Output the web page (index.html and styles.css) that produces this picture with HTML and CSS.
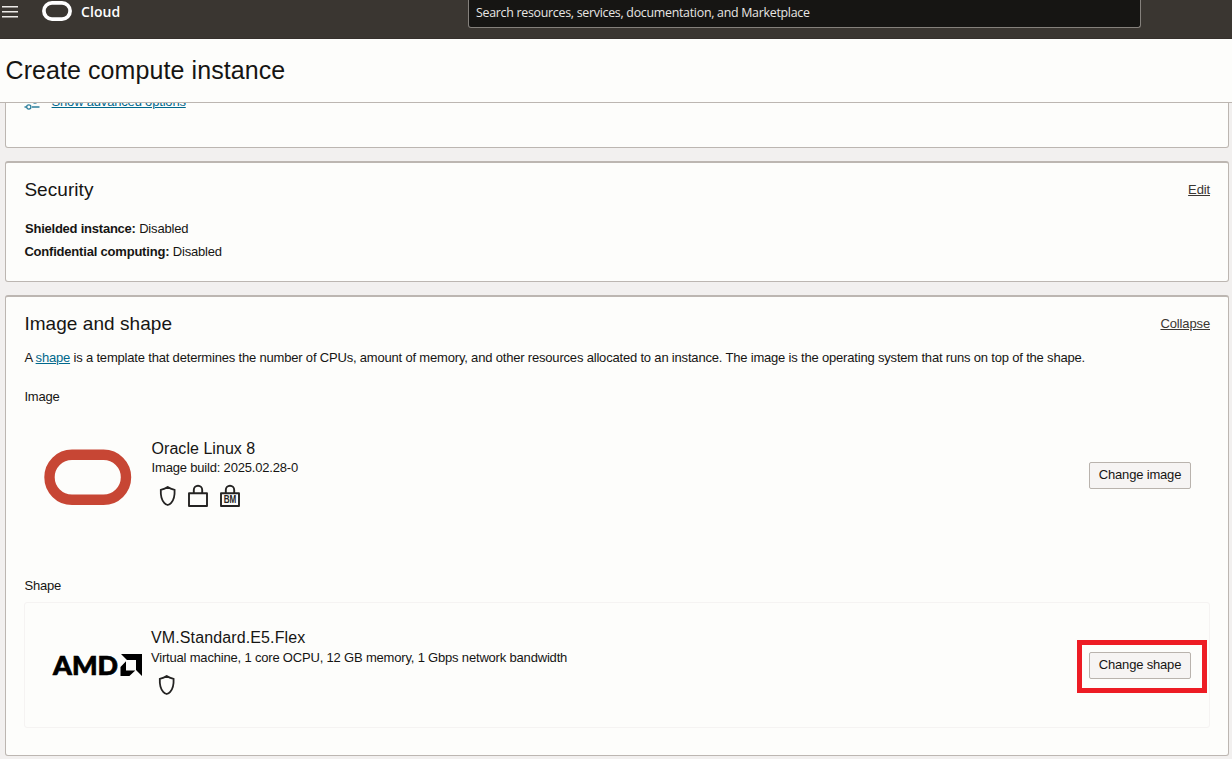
FILE: index.html
```html
<!DOCTYPE html>
<html lang="en">
<head>
<meta charset="utf-8">
<title>Create compute instance</title>
<link rel="stylesheet" href="styles.css">
</head>
<body>
<header class="topbar">
  <svg class="menu" width="16" height="12" viewBox="0 0 16 12"><path d="M0 .8h16M0 5.800h16M0 10.800h16" stroke="#eceae7" stroke-width="1.500"/></svg>
  <svg class="brand-mark" width="30" height="20" viewBox="0 0 30 20"><rect x="1.900" y="1.900" width="26.200" height="16.200" rx="8.100" fill="none" stroke="#fff" stroke-width="3.700"/></svg>
  <span class="brand">Cloud</span>
  <div class="search"><span>Search resources, services, documentation, and Marketplace</span></div>
</header>
<div class="titlebar"><h1>Create compute instance</h1></div>
<main class="content">
  <section class="card advanced">
    <svg class="sliders" width="16" height="17" viewBox="0 0 16 17"><g fill="none" stroke="#2c7f9c" stroke-width="1.300"><path d="M0 7.500h8.500M13 7.500h3M.5 13h2.200M8 13h7.500"/><circle cx="11" cy="6.800" r="2.200"/><circle cx="4.800" cy="13" r="2.100"/></g></svg>
    <a class="link">Show advanced options</a>
  </section>
  <section class="card security">
    <div class="card-head"><h2>Security</h2><a class="action">Edit</a></div>
    <p class="pair shielded"><b>Shielded instance:</b> <span>Disabled</span></p>
    <p class="pair"><b>Confidential computing:</b> <span>Disabled</span></p>
  </section>
  <section class="card shape-card">
    <div class="card-head"><h2>Image and shape</h2><a class="action">Collapse</a></div>
    <p class="intro">A <a class="link">shape</a> is a template that determines the number of CPUs, amount of memory, and other resources allocated to an instance. The image is the operating system that runs on top of the shape.</p>
    <h3 class="label">Image</h3>
    <div class="option image-option">
      <svg class="oracle" width="88" height="56" viewBox="0 0 88 56"><rect x="5.500" y="5.800" width="76.500" height="45" rx="22.500" fill="none" stroke="#c74634" stroke-width="10.400"/></svg>
      <div class="details">
        <h4>Oracle Linux 8</h4>
        <p>Image build: 2025.02.28-0</p>
        <div class="icons">
          <svg class="shield" width="16" height="20" viewBox="0 0 16 20"><path d="M7.700 1C5.700 2.400 3.200 3.300.8 3.900 0.600 8.500 1 13.500 4.200 16.800 5.200 17.900 6.400 18.600 7.700 19 9 18.600 10.200 17.900 11.200 16.800 14.400 13.500 14.800 8.500 14.600 3.900 12.200 3.300 9.700 2.400 7.700 1Z" fill="none" stroke="#242322" stroke-width="1.800"/></svg>
          <svg class="lock" width="20" height="22" viewBox="0 0 20 22"><path d="M1 8.200h18V21H1ZM5.800 8.200V5a4.200 4.200 0 0 1 8.400 0V8.200" fill="none" stroke="#242322" stroke-width="1.900" stroke-linejoin="round"/></svg>
          <svg class="lock" width="20" height="22" viewBox="0 0 20 22"><path d="M1 8.200h18V21H1ZM5.800 8.200V5a4.200 4.200 0 0 1 8.400 0V8.200" fill="none" stroke="#242322" stroke-width="1.900" stroke-linejoin="round"/><text class="bm" x="3.700" y="18.200" textLength="12.600" lengthAdjust="spacingAndGlyphs">BM</text></svg>
        </div>
      </div>
      <button>Change image</button>
    </div>
    <h3 class="label shape-label">Shape</h3>
    <div class="option shape-option">
      <svg class="amd" width="91" height="23" viewBox="0 0 91 23"><text class="amd-text" x="1" y="20.500" textLength="65" lengthAdjust="spacingAndGlyphs">AMD</text><path d="M69 0h21v22l-6-6V6H75ZM74 7.300v9.300h9.300L77.400 22H68.500V13Z"/></svg>
      <div class="details">
        <h4>VM.Standard.E5.Flex</h4>
        <p>Virtual machine, 1 core OCPU, 12 GB memory, 1 Gbps network bandwidth</p>
        <div class="icons">
          <svg class="shield" width="16" height="20" viewBox="0 0 16 20"><path d="M7.700 1C5.700 2.400 3.200 3.300.8 3.900 0.600 8.500 1 13.500 4.200 16.800 5.200 17.900 6.400 18.600 7.700 19 9 18.600 10.200 17.900 11.200 16.800 14.400 13.500 14.800 8.500 14.600 3.900 12.200 3.300 9.700 2.400 7.700 1Z" fill="none" stroke="#242322" stroke-width="1.800"/></svg>
        </div>
      </div>
      <div class="highlight"><button>Change shape</button></div>
    </div>
  </section>
</main>
</body>
</html>
```
FILE: styles.css
```css
* { box-sizing: border-box; }
body { margin: 0; height: 759px; overflow: hidden; display: flex; flex-direction: column; background: #f2f0ef; color: #161513; font: 13px/16px "Liberation Sans", Arial, sans-serif; letter-spacing: -.185px; }
h1, h2, h3, h4, p { margin: 0; font-weight: 400; }
svg { display: block; flex: none; overflow: visible; }
.topbar { height: 39px; flex: none; display: flex; align-items: flex-start; background: #3a3631; border-bottom: 1px solid #35302c; letter-spacing: 0; }
.menu { margin: 6px 0 0 2px; }
.brand-mark { margin: 1px 0 0 24px; }
.brand { width: 386px; margin: 2px 0 0 9px; color: #fff; font: 600 14px/20px "Open Sans", "Noto Sans", sans-serif; letter-spacing: .1px; }
.search { width: 673px; height: 28px; padding: 4px 7px; background: #161513; border: 1px solid #85817c; border-top: 0; border-radius: 0 0 3px 3px; color: #e8e6e3; font: 12.4px/18px "Open Sans", "Noto Sans", sans-serif; letter-spacing: -.28px; margin-left: 1px; white-space: nowrap; }
.titlebar { height: 64px; flex: none; padding: 15px 5.5px; background: #fdfdfb; border-bottom: 1px solid #bcb6b1; }
h1 { font-size: 25px; line-height: 32px; letter-spacing: .08px; }
.content { flex: 1; min-height: 0; overflow: hidden; padding: 0 3px 0 5px; }
.card { background: #fdfdfb; border: 1px solid #bcb6b1; border-top-width: 2px; border-radius: 3px; padding: 0 18px 0 18.4px; margin-bottom: 13px; }
.advanced { height: 65px; margin-top: -20px; padding-top: 9px; display: flex; gap: 11.2px; }
.link { color: #00688c; text-decoration: underline; }
.security { height: 121px; }
.card-head { display: flex; justify-content: space-between; align-items: center; height: 24px; margin-top: 15px; }
h2 { font-size: 19px; line-height: 24px; letter-spacing: .06px; }
.action { text-decoration: underline; color: #3a3632; letter-spacing: -.13px; }
.pair { height: 23px; }
.pair b { letter-spacing: -.2px; }
.shielded { margin-top: 19px; padding-left: .6px; }
.shielded b { letter-spacing: -.23px; }
.shape-card { height: 461px; margin-bottom: 0; }
.intro { margin-top: 14px; white-space: nowrap; }
.label { font-size: 13px; line-height: 16px; margin-top: 23px; }
.shape-label { margin-top: 39px; }
.option { display: flex; height: 126px; border: 1px solid transparent; border-radius: 3px; }
.image-option { margin-top: 8px; }
.shape-option { border-color: #f5f3f2; margin-top: 8px; }
.details { flex: 1; padding-top: 25px; }
h4 { font-size: 16px; line-height: 20px; letter-spacing: .04px; }
.shape-option h4 { letter-spacing: .12px; }
.details p { line-height: 20px; }
.image-option p { margin-top: -1px; }
.icons { display: flex; gap: 12px; padding: 7px 0 0 8px; }
.image-option .shield { margin-top: 1px; }
.oracle { margin: 35px 19.6px 0 18.6px; }
.amd { margin: 51px 7.600px 0 27px; }
button { width: 102px; height: 27px; padding: 0 0 2px; margin: 0; background: #f6f4f3; border: 1px solid #b9b3ad; border-radius: 2px; color: #161513; font: 13px/23px "Liberation Sans", Arial, sans-serif; letter-spacing: -.18px; }
.image-option button { margin: 48px 18px 0 0; }
.highlight { width: 130px; height: 53px; margin: 37px 2px 0 0; padding: 7px; border: 5px solid #ed1c24; }
.amd-text { font: 900 26px Lato, sans-serif; letter-spacing: 0; stroke: #000; stroke-width: .7px; }
.bm { font: 700 10px "Liberation Sans", sans-serif; letter-spacing: 0; fill: #242322; }
```
